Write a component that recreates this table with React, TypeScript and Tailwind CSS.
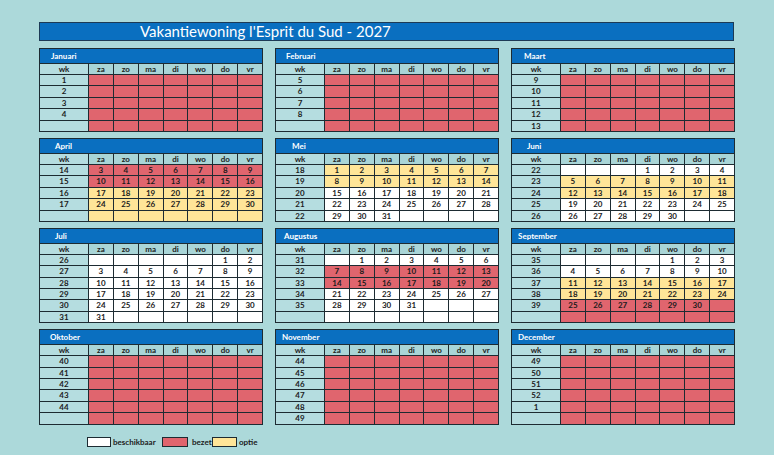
import React from 'react';

type Color = 'w' | 'r' | 'y';
type Row = { wk: string; days: (number | null)[]; color: Color | Color[] };
type Month = { name: string; pad: string; rows: Row[] };

const blank7 = [null, null, null, null, null, null, null];
const seq = (from: number, to: number) => {
  const out: (number | null)[] = [];
  for (let i = from; i <= to; i++) out.push(i);
  return out;
};
const pad7 = (lead: number, days: number[] | (number | null)[]) => {
  const out: (number | null)[] = Array(lead).fill(null).concat(days);
  while (out.length < 7) out.push(null);
  return out;
};

const redWeeks = (weeks: string[]): Row[] => weeks.map((wk) => ({ wk, days: blank7, color: 'r' }));

const months: Month[] = [
  { name: 'Januari', pad: 'pl-[11px]', rows: redWeeks(['1', '2', '3', '4', '']) },
  { name: 'Februari', pad: 'pl-[10px]', rows: redWeeks(['5', '6', '7', '8', '']) },
  { name: 'Maart', pad: 'pl-[12px]', rows: redWeeks(['9', '10', '11', '12', '13']) },
  {
    name: 'April',
    pad: 'pl-[15px]',
    rows: [
      { wk: '14', days: seq(3, 9), color: 'r' },
      { wk: '15', days: seq(10, 16), color: 'r' },
      { wk: '16', days: seq(17, 23), color: 'y' },
      { wk: '17', days: seq(24, 30), color: 'y' },
      { wk: '', days: blank7, color: 'y' },
    ],
  },
  {
    name: 'Mei',
    pad: 'pl-[16px]',
    rows: [
      { wk: '18', days: seq(1, 7), color: 'y' },
      { wk: '19', days: seq(8, 14), color: 'y' },
      { wk: '20', days: seq(15, 21), color: 'w' },
      { wk: '21', days: seq(22, 28), color: 'w' },
      { wk: '22', days: pad7(0, seq(29, 31)), color: 'w' },
    ],
  },
  {
    name: 'Juni',
    pad: 'pl-[15px]',
    rows: [
      { wk: '22', days: pad7(3, seq(1, 4)), color: 'w' },
      { wk: '23', days: seq(5, 11), color: 'y' },
      { wk: '24', days: seq(12, 18), color: 'y' },
      { wk: '25', days: seq(19, 25), color: 'w' },
      { wk: '26', days: pad7(0, seq(26, 30)), color: 'w' },
    ],
  },
  {
    name: 'Juli',
    pad: 'pl-[15px]',
    rows: [
      { wk: '26', days: pad7(5, seq(1, 2)), color: 'w' },
      { wk: '27', days: seq(3, 9), color: 'w' },
      { wk: '28', days: seq(10, 16), color: 'w' },
      { wk: '29', days: seq(17, 23), color: 'w' },
      { wk: '30', days: seq(24, 30), color: 'w' },
      { wk: '31', days: pad7(0, [31]), color: 'w' },
    ],
  },
  {
    name: 'Augustus',
    pad: 'pl-[8px]',
    rows: [
      { wk: '31', days: pad7(1, seq(1, 6)), color: 'w' },
      { wk: '32', days: seq(7, 13), color: 'r' },
      { wk: '33', days: seq(14, 20), color: 'r' },
      { wk: '34', days: seq(21, 27), color: 'w' },
      { wk: '35', days: pad7(0, seq(28, 31)), color: 'w' },
      { wk: '', days: blank7, color: 'w' },
    ],
  },
  {
    name: 'September',
    pad: 'pl-[6px]',
    rows: [
      { wk: '35', days: pad7(4, seq(1, 3)), color: 'w' },
      { wk: '36', days: seq(4, 10), color: 'w' },
      { wk: '37', days: seq(11, 17), color: 'y' },
      { wk: '38', days: seq(18, 24), color: 'y' },
      { wk: '39', days: pad7(0, seq(25, 30)), color: 'r' },
      { wk: '', days: blank7, color: 'r' },
    ],
  },
  { name: 'Oktober', pad: 'pl-[10px]', rows: redWeeks(['40', '41', '42', '43', '44', '']) },
  { name: 'November', pad: 'pl-[6px]', rows: redWeeks(['44', '45', '46', '47', '48', '49']) },
  { name: 'December', pad: 'pl-[6px]', rows: redWeeks(['49', '50', '51', '52', '1', '']) },
];

const dayNames = ['za', 'zo', 'ma', 'di', 'wo', 'do', 'vr'];

const cellBg: Record<Color, string> = {
  w: 'bg-white',
  r: 'bg-[#e0656e]',
  y: 'bg-[#ffe598]',
};

function MonthBlock({ month }: { month: Month }) {
  return (
    <div className="border border-[#1d2b32] bg-[#b5dde0]">
      <div className={`h-[14px] bg-[#0a6fc0] text-white text-[8px] font-bold leading-[15px] ${month.pad}`}>
        {month.name}
      </div>
      <div className="grid grid-cols-[48px_repeat(7,1fr)] h-[11px] border-t border-[#1d2b32] text-[8px] font-bold leading-[10px] text-[#1b1b1b]">
        <div className="text-center">wk</div>
        {dayNames.map((d) => (
          <div key={d} className="text-center border-l border-[#1d2b32] bg-[#a9d5d7]">
            {d}
          </div>
        ))}
      </div>
      {month.rows.map((row, i) => (
        <div
          key={i}
          className="grid grid-cols-[48px_repeat(7,1fr)] h-[11.4px] border-t border-[#1d2b32] text-[8px] font-bold leading-[10.4px] text-[#1b1b1b]"
        >
          <div className="text-center">{row.wk}</div>
          {row.days.map((d, j) => {
            const c = Array.isArray(row.color) ? row.color[j] : row.color;
            return (
              <div key={j} className={`text-center border-l border-[#1d2b32] ${cellBg[c]}`}>
                {d ?? ''}
              </div>
            );
          })}
        </div>
      ))}
    </div>
  );
}

export default function App() {
  return (
    <div className="w-[774px] h-[455px] bg-[#acd9da] pt-[22px] pl-[39px] font-['Lato','Open_Sans',sans-serif] overflow-hidden">
      <div className="w-[695px] h-[19px] bg-[#0a6fc0] border border-[#1d3a55] text-white text-[15px] leading-[17px] pl-[100px]">
        Vakantiewoning l'Esprit du Sud - 2027
      </div>
      <div className="mt-[7px] w-[696px] grid grid-cols-3 gap-x-[12px] gap-y-[6px]">
        {months.map((m) => (
          <MonthBlock key={m.name} month={m} />
        ))}
      </div>
      <div className="mt-[12px] ml-[48px] flex items-center h-[10px] text-[8px] font-bold text-[#1b1b1b]">
        <div className="w-[24px] h-[10px] bg-white border border-[#1d2b32]" />
        <span className="ml-[2px] w-[49px]">beschikbaar</span>
        <div className="w-[26px] h-[10px] bg-[#e0656e] border border-[#1d2b32]" />
        <span className="ml-[4px] w-[20px]">bezet</span>
        <div className="w-[25px] h-[10px] bg-[#ffe598] border border-[#1d2b32]" />
        <span className="ml-[2px]">optie</span>
      </div>
    </div>
  );
}
